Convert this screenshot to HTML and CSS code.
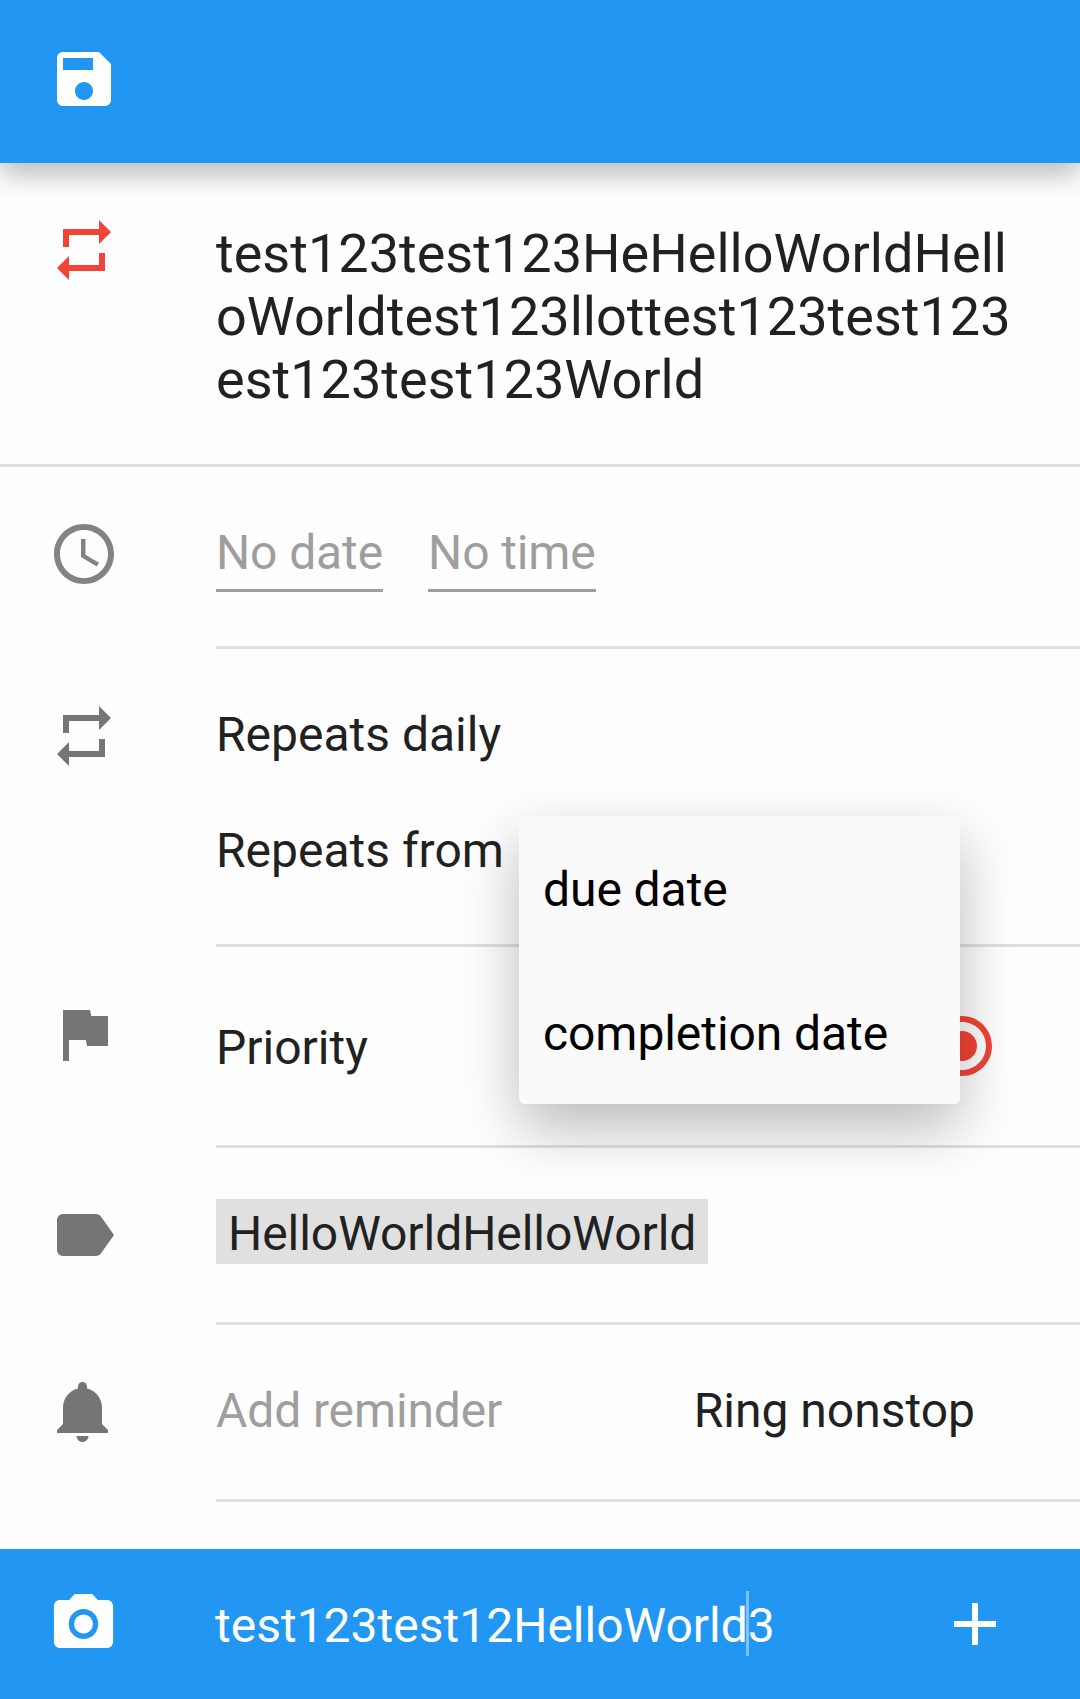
FILE: index.html
```html
<!DOCTYPE html>
<html lang="en">
<head>
<meta charset="utf-8">
<title>Edit task</title>
<link rel="stylesheet" href="styles.css">
</head>
<body>
<header class="appbar">
  <svg class="icon" viewBox="0 0 24 24"><path d="M17 3H5c-1.11 0-2 .9-2 2v14c0 1.1.89 2 2 2h14c1.1 0 2-.9 2-2V7l-4-4zm-5 16c-1.66 0-3-1.34-3-3s1.34-3 3-3 3 1.34 3 3-1.34 3-3 3zm3-10H5V5h10v4z"/></svg>
</header>
<main class="form">
  <section class="row row-title">
    <svg class="icon icon-red" viewBox="0 0 24 24"><path d="M7 7h10v3l4-4-4-4v3H5v6h2V7zm10 10H7v-3l-4 4 4 4v-3h12v-6h-2v4z"/></svg>
    <h1 class="title">test123test123HeHelloWorldHelloWorldtest123llottest123test123est123test123World</h1>
  </section>
  <section class="row row-date">
    <svg class="icon icon-clock" viewBox="0 0 24 24"><path d="M11.99 2C6.47 2 2 6.48 2 12s4.47 10 9.99 10C17.52 22 22 17.52 22 12S17.52 2 11.99 2zM12 20c-4.42 0-8-3.58-8-8s3.58-8 8-8 8 3.58 8 8-3.58 8-8 8zM12.5 7H11v6l5.25 3.15.75-1.23-4.5-2.67z"/></svg>
    <div class="content dates">
      <span class="field">No date</span>
      <span class="field">No time</span>
    </div>
  </section>
  <section class="row row-repeat">
    <svg class="icon" viewBox="0 0 24 24"><path d="M7 7h10v3l4-4-4-4v3H5v6h2V7zm10 10H7v-3l-4 4 4 4v-3h12v-6h-2v4z"/></svg>
    <div class="content repeats">
      <span>Repeats daily</span>
      <span>Repeats from</span>
    </div>
    <div class="menu">
      <div class="menu-item">due date</div>
      <div class="menu-item">completion date</div>
    </div>
  </section>
  <section class="row row-priority">
    <svg class="icon" viewBox="0 0 24 24"><path d="M14.4 6L14 4H5v17h2v-7h5.6l.4 2h7V6z"/></svg>
    <div class="content priority">
      <span class="priority-label">Priority</span>
      <svg class="radio" viewBox="0 0 24 24"><path d="M12 7c-2.76 0-5 2.24-5 5s2.24 5 5 5 5-2.24 5-5-2.24-5-5-5zm0-5C6.48 2 2 6.48 2 12s4.48 10 10 10 10-4.48 10-10S17.52 2 12 2zm0 18c-4.42 0-8-3.58-8-8s3.58-8 8-8 8 3.58 8 8-3.58 8-8 8z"/></svg>
    </div>
  </section>
  <section class="row row-short">
    <svg class="icon" viewBox="0 0 24 24"><path d="M17.63 5.84C17.27 5.33 16.67 5 16 5L5 5.01C3.9 5.01 3 5.9 3 7v10c0 1.1.9 1.99 2 1.99L16 19c.67 0 1.27-.33 1.63-.84L22 12l-4.37-6.16z"/></svg>
    <div class="content tags"><span class="chip">HelloWorldHelloWorld</span></div>
  </section>
  <section class="row row-short">
    <svg class="icon" viewBox="0 0 24 24"><path d="M11.5 22c1.1 0 2-.9 2-2h-4c0 1.1.9 2 2 2zm6.5-6v-5.5c0-3.07-2.13-5.64-5-6.32V3.5c0-.83-.67-1.5-1.5-1.5S10 2.67 10 3.5v.68c-2.87.68-5 3.25-5 6.32V16l-2 2v1h17v-1l-2-2z"/></svg>
    <div class="content reminder">
      <span class="hint">Add reminder</span>
      <span>Ring nonstop</span>
    </div>
  </section>
</main>
<footer class="comment">
  <svg class="icon icon-camera" viewBox="0 0 24 24" preserveAspectRatio="none"><circle cx="12" cy="12" r="3.2"/><path d="M9 2L7.17 4H4c-1.1 0-2 .9-2 2v12c0 1.1.9 2 2 2h16c1.1 0 2-.9 2-2V6c0-1.1-.9-2-2-2h-3.17L15 2H9zm3 15c-2.76 0-5-2.24-5-5s2.24-5 5-5 5 2.24 5 5-2.24 5-5 5z"/></svg>
  <span class="comment-text">test123test12HelloWorld<i class="caret"></i>3</span>
  <svg class="icon-add" viewBox="0 0 24 24"><path d="M19 13h-6v6h-2v-6H5v-2h6V5h2v6h6v2z"/></svg>
</footer>
</body>
</html>
```
FILE: styles.css
```css
* { box-sizing: border-box; }

body {
  margin: 0;
  width: 1080px;
  height: 1699px;
  display: flex;
  flex-direction: column;
  overflow: hidden;
  background: #fefefe;
  color: #212121;
  font: 400 48px/58px Roboto, sans-serif;
}

svg { display: block; flex: none; width: 72px; height: 72px; }

.icon { margin: 51px 96px 0 48px; fill: #757575; }
.icon-red { fill: #f44336; }
.icon-clock { fill: #838383; }

.appbar {
  flex: none;
  height: 163px;
  padding-top: 43px;
  background: #2196f3;
  box-shadow: 0 12px 25px rgba(0, 0, 0, .26);
}
.appbar .icon { margin-top: 0; fill: #fff; }

.form { flex: 1; }

.row { display: flex; position: relative; }
.row-title { height: 304px; border-bottom: 3px solid #e0e0e0; }
.row-date { height: 182px; }
.row-repeat { height: 298px; z-index: 1; }
.row-priority { height: 201px; }
.row-short { height: 177px; }

.title {
  margin: 59px 64px 0 0;
  flex: 1;
  font-size: 54px;
  font-weight: 400;
  line-height: 63px;
  letter-spacing: .02px;
  word-break: break-all;
}

.content {
  flex: 1;
  display: flex;
  align-items: flex-start;
  padding-top: 57px;
  border-bottom: 3px solid #e0e0e0;
}

.dates { gap: 45px; }
.field {
  padding-bottom: 7px;
  border-bottom: 3px solid #9e9e9e;
  color: #9e9e9e;
  letter-spacing: -.12px;
}

.repeats { flex-direction: column; gap: 58px; }

.priority { justify-content: space-between; padding-top: 63px; padding-right: 82px; }
.priority-label { padding-top: 9px; }
.radio { fill: #f44336; }

.tags { padding-top: 51px; }
.chip {
  height: 65px;
  padding: 6px 12px 0;
  background: #e0e0e0;
  letter-spacing: -.05px;
}

.reminder { justify-content: space-between; padding-right: 105px; }
.hint { color: #9e9e9e; letter-spacing: -.12px; }

/* Drop-down that opens over the repeat and priority rows */
.menu {
  position: absolute;
  left: 519px;
  top: 167px;
  width: 441px;
  border-radius: 6px;
  background: #fafafa;
  color: #000;
  letter-spacing: -.07px;
  box-shadow: 0 24px 60px rgba(0, 0, 0, .27);
}
.menu-item { height: 144px; padding: 45px 24px 0; }

.comment {
  flex: none;
  display: flex;
  height: 150px;
  padding-right: 69px;
  background: #2196f3;
  color: #fff;
}
.comment .icon { margin-top: 39px; fill: #fff; }
.comment .icon-camera { width: 71px; }
.comment-text { flex: 1; padding-top: 48px; }
.icon-add { margin-top: 39px; fill: #fff; }

/* Text cursor: takes no room between the letters */
.caret { position: relative; }
.caret::before {
  content: "";
  position: absolute;
  left: -2px;
  top: -6px;
  width: 3px;
  height: 65px;
  background: rgba(255, 255, 255, .42);
}
```
